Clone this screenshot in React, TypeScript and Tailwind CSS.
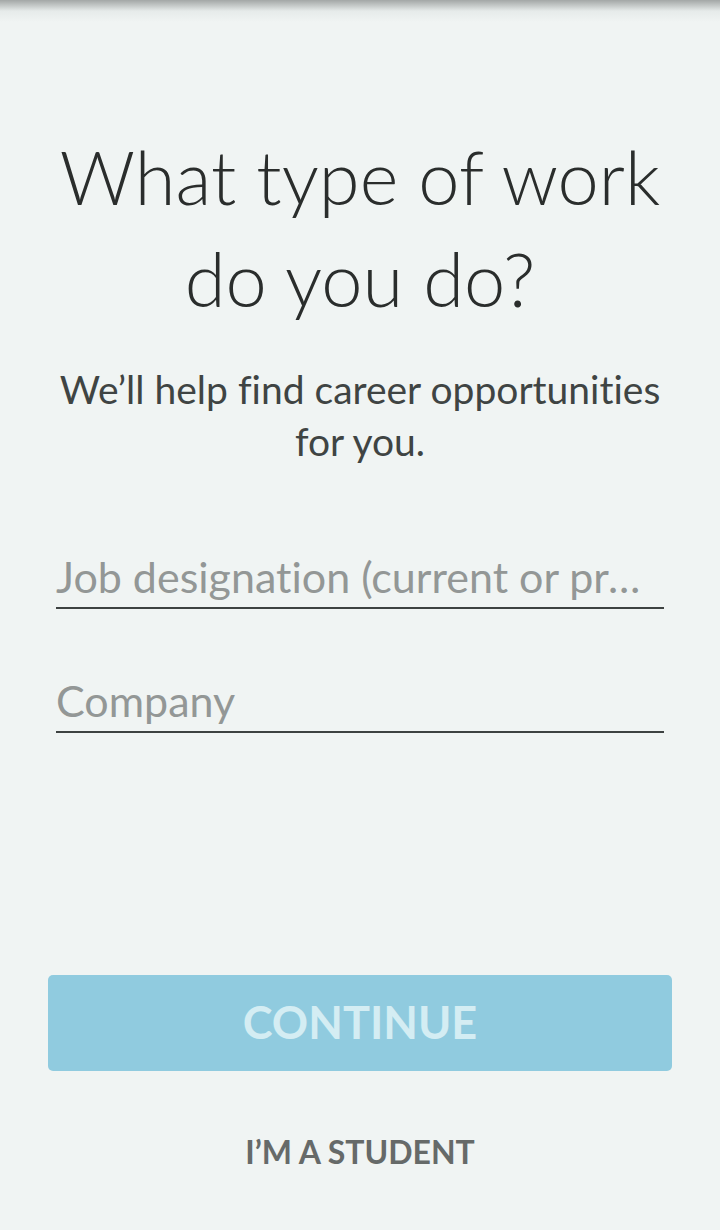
const font = { fontFamily: "Lato, 'Open Sans', sans-serif" };

const Field = ({ placeholder }: { placeholder: string }) => (
  <div className="border-b-2 border-[#3d4241] h-[64px] flex items-end">
    <input
      className="w-full bg-transparent outline-none pr-[18px] text-[43px] leading-[60px] text-[#2a2d2c] placeholder:text-[#939796] truncate [font-variant-ligatures:none]"
      placeholder={placeholder}
    />
  </div>
);

const App = () => {
  return (
    <div className="min-h-[1230px] bg-[#f0f4f3] flex flex-col" style={font}>
      <div className="h-[22px] bg-gradient-to-b from-[#a3a7a6] via-[#e6ebea] to-[#f0f4f3]" />
      <h1 className="mt-[104px] text-center font-light text-[74px] leading-[102px] text-[#2a2d2c] px-6">
        What type of work
        <br />
        do you do?
      </h1>
      <p className="mt-[33px] text-center text-[39px] leading-[52px] text-[#3f4443] px-10 [font-variant-ligatures:none]">
        We’ll help find career opportunities
        <br />
        for you.
      </p>
      <div className="mt-[78px] mx-[56px] flex flex-col gap-[60px]">
        <Field placeholder="Job designation (current or previous)" />
        <Field placeholder="Company" />
      </div>
      <div className="mt-[242px] mx-[48px]">
        <button className="w-full h-[96px] rounded-[5px] bg-[#90cbdf] text-[#d4edf3] text-[45px] font-bold">
          CONTINUE
        </button>
      </div>
      <button className="mt-[57px] self-center text-[32px] font-bold text-[#666a69]">
        I’M A STUDENT
      </button>
    </div>
  );
};

export default App;
